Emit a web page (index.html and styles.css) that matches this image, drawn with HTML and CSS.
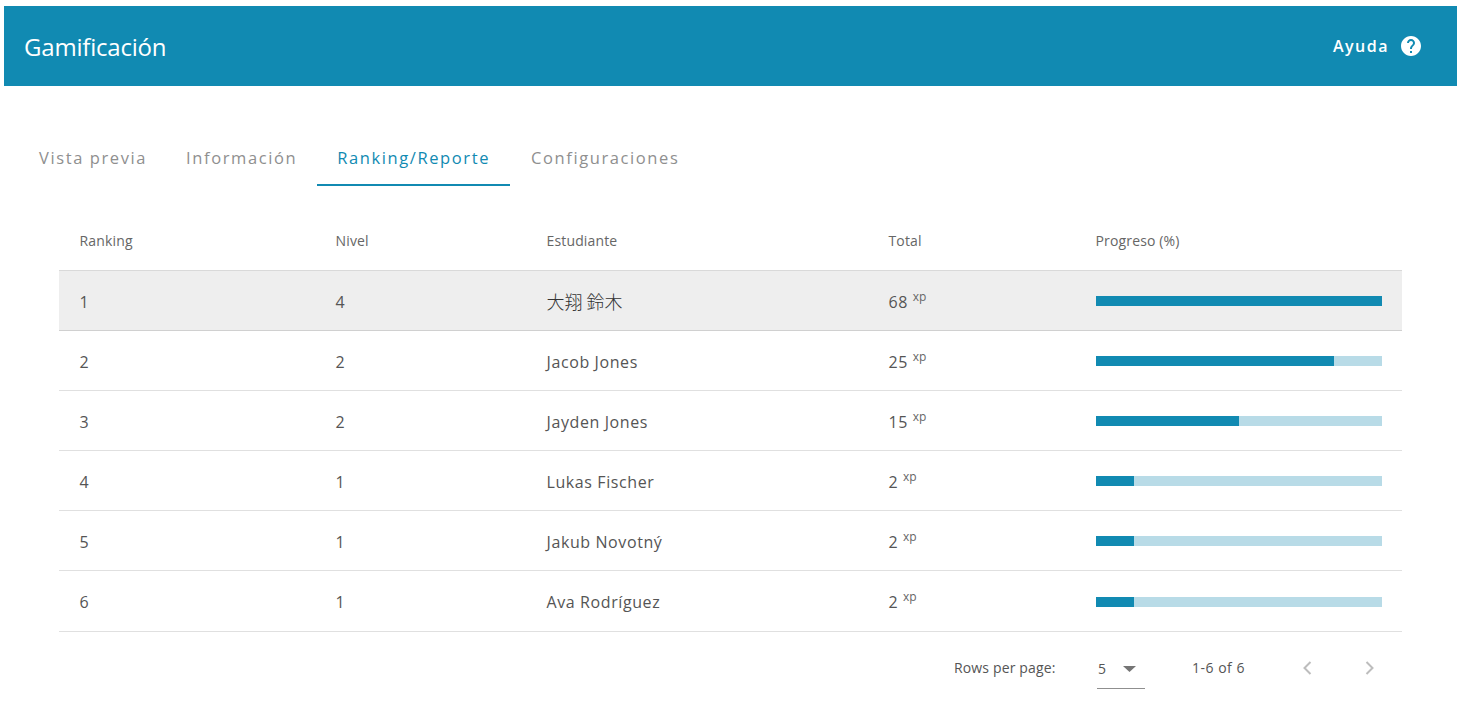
FILE: index.html
```html
<!DOCTYPE html>
<html lang="es">
<head>
<meta charset="utf-8">
<title>Gamificación</title>
<link rel="stylesheet" href="styles.css">
</head>
<body>
<header class="app-bar">
  <h1 class="app-title">Gamificación</h1>
  <a class="help"><span class="help-label">Ayuda</span>
    <svg class="help-icon" viewBox="0 0 24 24" width="24" height="24"><path fill="#fff" d="M12 2C6.48 2 2 6.48 2 12s4.48 10 10 10 10-4.48 10-10S17.52 2 12 2zm1 17h-2v-2h2v2zm2.07-7.75l-.9.92C13.45 12.9 13 13.5 13 15h-2v-.5c0-1.1.45-2.1 1.17-2.83l1.24-1.26c.37-.36.59-.86.59-1.41 0-1.1-.9-2-2-2s-2 .9-2 2H8c0-2.21 1.79-4 4-4s4 1.79 4 4c0 .88-.36 1.68-.93 2.25z"/></svg>
  </a>
</header>
<nav class="tabs">
  <a class="tab">Vista previa</a>
  <a class="tab">Información</a>
  <a class="tab tab-active">Ranking/Reporte</a>
  <a class="tab">Configuraciones</a>
</nav>
<main class="content">
  <table class="ranking">
    <colgroup>
      <col class="col-rank"><col class="col-level"><col class="col-student"><col class="col-total"><col class="col-progress">
    </colgroup>
    <thead>
      <tr><th>Ranking</th><th>Nivel</th><th>Estudiante</th><th>Total</th><th>Progreso (%)</th></tr>
    </thead>
    <tbody>
      <tr class="row-self"><td>1</td><td>4</td><td class="cjk">大翔 鈴木</td><td>68 <sup class="xp">xp</sup></td><td><div class="bar"><div class="bar-fill" style="width:100%"></div></div></td></tr>
      <tr><td>2</td><td>2</td><td>Jacob Jones</td><td>25 <sup class="xp">xp</sup></td><td><div class="bar"><div class="bar-fill" style="width:83.3%"></div></div></td></tr>
      <tr><td>3</td><td>2</td><td>Jayden Jones</td><td>15 <sup class="xp">xp</sup></td><td><div class="bar"><div class="bar-fill" style="width:50%"></div></div></td></tr>
      <tr><td>4</td><td>1</td><td>Lukas Fischer</td><td>2 <sup class="xp">xp</sup></td><td><div class="bar"><div class="bar-fill" style="width:13.3%"></div></div></td></tr>
      <tr><td>5</td><td>1</td><td>Jakub Novotný</td><td>2 <sup class="xp">xp</sup></td><td><div class="bar"><div class="bar-fill" style="width:13.3%"></div></div></td></tr>
      <tr class="row-last"><td>6</td><td>1</td><td>Ava Rodríguez</td><td>2 <sup class="xp">xp</sup></td><td><div class="bar"><div class="bar-fill" style="width:13.3%"></div></div></td></tr>
    </tbody>
  </table>
  <div class="pager">
    <span class="pager-label">Rows per page:</span>
    <span class="pager-select"><span>5</span><svg class="caret" viewBox="0 0 13 6" width="13" height="6"><path fill="#757575" d="M0 0h13L6.5 6z"/></svg></span>
    <span class="pager-range">1-6 of 6</span>
    <span class="pager-nav">
      <svg viewBox="0 0 24 24" width="24" height="24"><path fill="none" stroke="#bdbdbd" stroke-width="2" d="M15.5 6l-6 6 6 6"/></svg>
      <svg viewBox="0 0 24 24" width="24" height="24"><path fill="none" stroke="#bdbdbd" stroke-width="2" d="M8.5 6l6 6-6 6"/></svg>
    </span>
  </div>
</main>
</body>
</html>
```
FILE: styles.css
```css
* { box-sizing: border-box; }
html, body { height: 100%; }
body {
  margin: 0;
  padding: 6px 2px 0 4px;
  background: #fff;
  font-family: "Open Sans", "Noto Sans CJK JP", sans-serif;
  color: #424242;
  overflow: hidden;
}
.app-bar {
  height: 80px;
  background: #118ab2;
  display: flex;
  align-items: center;
  justify-content: space-between;
  padding: 0 24px 0 20px;
  color: #fff;
}
.app-title { margin: 0; font-size: 24px; font-weight: 400; letter-spacing: -0.2px; }
.help { display: flex; align-items: center; gap: 10px; padding-right: 10px; }
.help-label { font-size: 16px; font-weight: 600; letter-spacing: 1.5px; }
.help-icon { display: block; }
.tabs {
  display: flex;
  margin: 52px 0 0 15px;
  height: 48px;
}
.tab {
  display: flex;
  align-items: center;
  padding: 0 20px 8px;
  font-size: 16.5px;
  letter-spacing: 1.6px;
  color: #8f8f8f;
  border-bottom: 2px solid transparent;
}
.tab:first-child { padding-right: 19px; }
.tab-active { color: #118ab2; border-bottom-color: #118ab2; margin-right: 1px; }
.content { margin: 25px 0 0 55px; width: 1343px; }
.ranking { width: 1343px; border-collapse: collapse; table-layout: fixed; }
.col-rank { width: 256px; }
.col-level { width: 211px; }
.col-student { width: 342px; }
.col-total { width: 207px; }
.col-progress { width: 327px; }
.ranking th, .ranking td { padding: 0 20px 0 20.5px; text-align: left; }
.ranking th {
  height: 59px;
  font-size: 14px;
  font-weight: 400;
  letter-spacing: 0.15px;
  color: #666;
  border-bottom: 1px solid #d9d9d9;
}
.ranking td {
  height: 60px;
  padding-top: 4px;
  font-size: 16px;
  letter-spacing: 0.6px;
  color: #555;
  border-bottom: 1px solid #e0e0e0;
}
.row-self td { background: #eee; border-bottom-color: #d0d0d0; }
.ranking .row-last td { height: 61px; padding-top: 2px; }
.ranking .cjk { padding-top: 2px; font-family: "Noto Sans CJK JP", sans-serif; font-weight: 300; font-size: 18px; letter-spacing: 0; color: #333; }
.xp { font-size: 12px; line-height: 0; vertical-align: 7px; letter-spacing: 0; color: #666; }
.bar { height: 10px; margin-bottom: 2px; background: #b8dbe7; }
.row-last .bar { margin-bottom: 0; }
.bar-fill { height: 100%; background: #118ab2; }
.pager {
  display: flex;
  align-items: center;
  height: 72px;
  font-size: 14px;
  letter-spacing: 0.15px;
  color: #555;
  padding-left: 895px;
}
.pager-label { width: 143px; }
.pager-select {
  width: 48px;
  height: 40px;
  margin-top: 3px;
  display: flex;
  align-items: center;
  justify-content: space-between;
  padding: 0 9px 0 1px;
  border-bottom: 1px solid #8f8f8f;
}
.caret { display: block; }
.pager-range { margin-left: 47px; letter-spacing: 0.5px; }
.pager-nav { display: flex; gap: 39px; margin-left: 50px; }
.pager-nav svg { display: block; }
```
